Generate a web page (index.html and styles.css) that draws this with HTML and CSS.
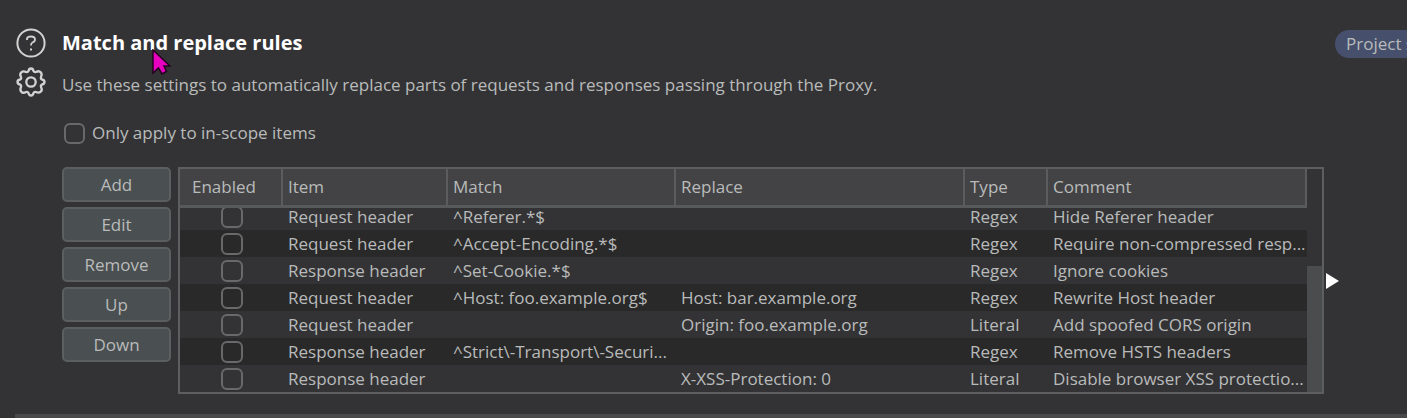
FILE: index.html
```html
<!DOCTYPE html>
<html lang="en">
<head>
<meta charset="utf-8">
<title>Match and replace rules</title>
<link rel="stylesheet" href="styles.css">
</head>
<body>
<main class="panel">
  <nav class="side">
    <button class="icon-button" type="button" aria-label="Help">
      <svg viewBox="0 0 30 30" width="30" height="30" fill="none" stroke="currentColor" stroke-width="2"><circle cx="15" cy="15" r="13.6"/><path d="M11 12V10.500Q11.500 8.500 15 8.500Q19 8.500 19 11.500Q19 13.500 16.500 14.500Q15 15.200 15 17.500" stroke-width="1.800"/><path d="M15 20.500V22.500"/></svg>
    </button>
    <button class="icon-button" type="button" aria-label="Options">
      <svg viewBox="0 0 30 30" width="30" height="30" fill="none" stroke="currentColor" stroke-width="2.300" stroke-linejoin="round"><path d="M12.500 4Q13 1.500 15 1.500T17.500 4Q18.200 5.500 20 5Q23 3.300 24.700 5.300T25 10Q24.500 11.700 26 12.500Q28.500 13 28.500 15T26 17.500Q24.500 18.300 25 20Q26.700 23 24.700 24.700T20 25Q18.200 24.500 17.500 26Q17 28.500 15 28.500T12.500 26Q11.800 24.500 10 25Q7 26.700 5.300 24.700T5 20Q5.500 18.300 4 17.500Q1.500 17 1.500 15T4 12.500Q5.500 11.700 5 10Q3.300 7 5.300 5.300T10 5Q11.800 5.500 12.500 4Z"/><circle cx="15" cy="15" r="4.700"/></svg>
    </button>
  </nav>
  <section class="content">
    <header class="heading">
      <h1 class="title">Match and replace rules
        <svg class="pointer" viewBox="0 0 19 27" width="19" height="27"><path d="M1 1V24L6.500 19L10 25L14.500 22.500L12 17H18Z" fill="#e800c0" stroke="#240020" stroke-width="1.500"/></svg>
      </h1>
      <span class="badge">Project s</span>
    </header>
    <p class="description">Use these settings to automatically replace parts of requests and responses passing through the Proxy.</p>
    <label class="scope"><input class="check" type="checkbox">Only apply to in-scope items</label>
    <div class="rules">
      <div class="actions">
        <button class="action" type="button">Add</button>
        <button class="action" type="button">Edit</button>
        <button class="action" type="button">Remove</button>
        <button class="action" type="button">Up</button>
        <button class="action" type="button">Down</button>
      </div>
      <div class="frame">
        <table class="table">
          <thead class="head"><tr class="row"><th class="cell">Enabled</th><th class="cell">Item</th><th class="cell">Match</th><th class="cell">Replace</th><th class="cell">Type</th><th class="cell">Comment</th></tr></thead>
          <tbody class="body">
            <tr class="row"><td class="cell"><input class="check" type="checkbox" aria-label="Enabled"></td><td class="cell">Request header</td><td class="cell">^Referer.*$</td><td class="cell"></td><td class="cell">Regex</td><td class="cell">Hide Referer header</td></tr>
            <tr class="row"><td class="cell"><input class="check" type="checkbox" aria-label="Enabled"></td><td class="cell">Request header</td><td class="cell">^Accept-Encoding.*$</td><td class="cell"></td><td class="cell">Regex</td><td class="cell">Require non-compressed resp...</td></tr>
            <tr class="row"><td class="cell"><input class="check" type="checkbox" aria-label="Enabled"></td><td class="cell">Response header</td><td class="cell">^Set-Cookie.*$</td><td class="cell"></td><td class="cell">Regex</td><td class="cell">Ignore cookies</td></tr>
            <tr class="row"><td class="cell"><input class="check" type="checkbox" aria-label="Enabled"></td><td class="cell">Request header</td><td class="cell">^Host: foo.example.org$</td><td class="cell">Host: bar.example.org</td><td class="cell">Regex</td><td class="cell">Rewrite Host header</td></tr>
            <tr class="row"><td class="cell"><input class="check" type="checkbox" aria-label="Enabled"></td><td class="cell">Request header</td><td class="cell"></td><td class="cell">Origin: foo.example.org</td><td class="cell">Literal</td><td class="cell">Add spoofed CORS origin</td></tr>
            <tr class="row"><td class="cell"><input class="check" type="checkbox" aria-label="Enabled"></td><td class="cell">Response header</td><td class="cell">^Strict\-Transport\-Securi...</td><td class="cell"></td><td class="cell">Regex</td><td class="cell">Remove HSTS headers</td></tr>
            <tr class="row"><td class="cell"><input class="check" type="checkbox" aria-label="Enabled"></td><td class="cell">Response header</td><td class="cell"></td><td class="cell">X-XSS-Protection: 0</td><td class="cell">Literal</td><td class="cell">Disable browser XSS protectio...</td></tr>
          </tbody>
        </table>
        <div class="scrollbar"><div class="thumb"></div></div>
      </div>
      <svg class="expander" viewBox="0 0 13 16" width="13" height="16"><path d="M0 0L13 8L0 16Z" fill="#fff"/></svg>
    </div>
  </section>
</main>
<hr class="divider">
</body>
</html>
```
FILE: styles.css
```css
* { box-sizing: border-box; }
body {
  margin: 0;
  background: #333335;
  color: #b9bbbb;
  font: 17px/24px "Open Sans", "Noto Sans", sans-serif;
  overflow: hidden;
}
button, input { font: inherit; color: inherit; margin: 0; }
.panel { display: flex; gap: 16px; padding: 28px 0 0 16px; }
.side { display: flex; flex-direction: column; gap: 9px; }
.icon-button {
  display: flex;
  padding: 0;
  border: 0;
  background: none;
  color: #d2d2d2;
}
.content { flex: 1; min-width: 0; }
.heading { display: flex; justify-content: space-between; height: 30px; }
.title {
  position: relative;
  margin: 0;
  color: #fff;
  font-size: 20px;
  font-weight: 700;
  line-height: 30px;
}
.pointer { position: absolute; left: 90px; top: 21px; }
.badge {
  align-self: flex-end;
  width: 72px;
  height: 28px;
  padding-left: 11px;
  border-radius: 14px 0 0 14px;
  background: #46506c;
  line-height: 28px;
  white-space: nowrap;
  overflow: hidden;
}
.description { margin: 15px 0 24px; }
.scope { display: flex; align-items: center; gap: 7px; width: fit-content; padding-left: 2px; }
.check {
  appearance: none;
  flex: none;
  width: 22px;
  height: 22px;
  border: 2px solid #68696a;
  border-radius: 6px;
}
.scope .check { width: 21px; height: 21px; }
.rules { display: flex; margin-top: 22px; }
.actions { display: flex; flex-direction: column; gap: 5px; width: 109px; margin-right: 7px; }
.action {
  height: 35px;
  padding: 0;
  border: 2px solid #5b5f60;
  border-radius: 5px;
  background: #4a4f51;
}
.frame {
  display: flex;
  flex: 1;
  min-width: 0;
  border: 2px solid #5d5e5f;
}
.table { display: block; flex: 1; min-width: 0; }
.head { display: block; }
.row {
  display: grid;
  flex: none;
  grid-template-columns: 103fr 165fr 228fr 289fr 83fr 259fr;
}
.cell {
  min-width: 0;
  padding: 0 0 0 5px;
  line-height: 27px;
  text-align: left;
  font-weight: 400;
  white-space: nowrap;
}
.head .cell {
  border-right: 2px solid #5b5c5d;
  border-bottom: 3px solid #58595a;
  background: #434345;
  line-height: 36px;
}
.head .cell:first-child { padding-left: 12px; }
.body {
  display: flex;
  flex-direction: column;
  justify-content: flex-end;
  height: 184px;
  overflow: hidden;
}
.body .row:nth-child(even) { background: #292929; }
.body .cell:first-child { display: flex; align-items: center; justify-content: center; padding: 0; }
.scrollbar { display: flex; align-items: flex-end; width: 15px; }
.thumb { width: 100%; height: 126px; background: #4b4c4e; }
.expander { align-self: center; margin: 0 68px 0 2px; }
.divider { height: 8px; margin: 20px 0 0 15px; border: 0; background: #49494b; }
```
